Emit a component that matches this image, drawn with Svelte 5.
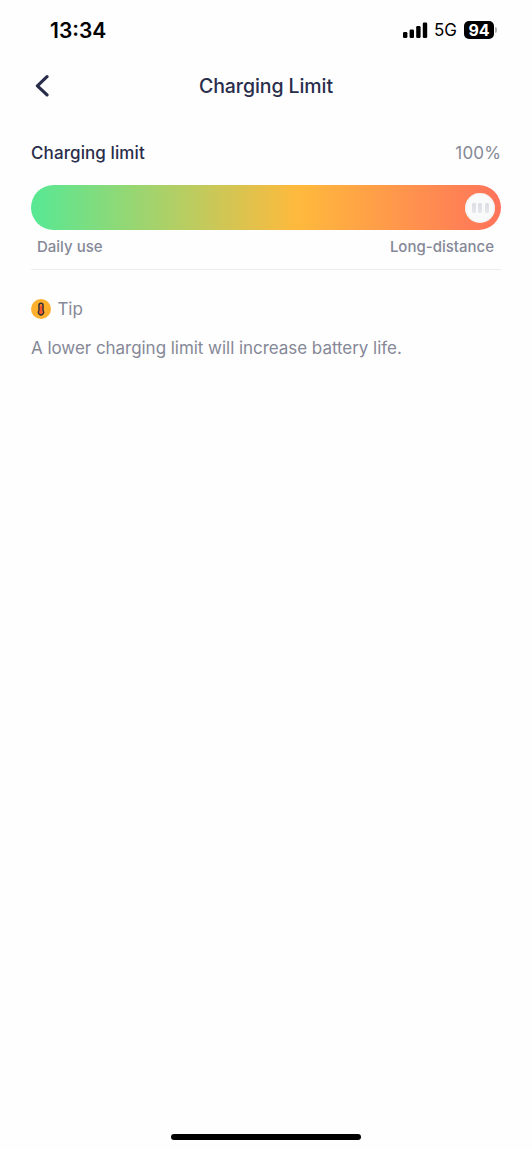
<script lang="ts">
  let limit = $state(100);
  const battery = 94;
  const signalBars = [6, 8.5, 12, 15.5];
</script>

<div class="screen">
  <div class="status-bar">
    <span class="time">13:34</span>
    <div class="status-icons">
      <svg class="signal" width="25" height="16" viewBox="0 0 25 16" aria-hidden="true">
        {#each signalBars as h, i}
          <rect x={i * 6.6} y={16 - h} width="4.4" height={h} rx="1.3" />
        {/each}
      </svg>
      <span class="network">5G</span>
      <div class="battery">
        <span class="battery-level">{battery}</span>
        <span class="battery-cap"></span>
      </div>
    </div>
  </div>

  <header class="nav">
    <button class="back" aria-label="Back">
      <svg width="14" height="22" viewBox="0 0 14 22" fill="none">
        <path d="M12 1.7 2.4 10.8 12 19.9" stroke="currentColor" stroke-width="3.2" stroke-linecap="round" stroke-linejoin="round" />
      </svg>
    </button>
    <h1>Charging Limit</h1>
  </header>

  <main>
    <div class="limit-row">
      <span class="limit-label">Charging limit</span>
      <span class="limit-value">{limit}%</span>
    </div>

    <div class="track">
      <div class="thumb">
        <span></span>
        <span></span>
        <span></span>
      </div>
    </div>

    <div class="range-labels">
      <span class="daily">Daily use</span>
      <span class="distance">Long-distance</span>
    </div>

    <div class="tip-title">
      <svg width="20" height="20" viewBox="0 0 20 20" aria-hidden="true">
        <circle cx="10" cy="10" r="10" fill="#fdb02b" />
        <path
          d="M8 6.2a2 2 0 0 1 4 0v5.6a2.5 2.5 0 1 1-4 0z"
          fill="#f99a2b"
          stroke="#322b35"
          stroke-width="1.5"
        />
        <path d="M10 7.6v5.6" stroke="#f4552e" stroke-width="2.2" stroke-linecap="round" />
        <circle cx="10" cy="13.3" r="1.7" fill="#f4552e" />
      </svg>
      <span>Tip</span>
    </div>
    <p>A lower charging limit will increase battery life.</p>
  </main>

  <div class="home-indicator"></div>
</div>

<style>
  :global(body) {
    background: #fff;
  }

  .screen {
    display: flex;
    flex-direction: column;
    box-sizing: border-box;
    height: 1150px;
    padding-bottom: 10px;
    background: #fefefe;
    color: #282d4b;
    font-family: Inter, "Liberation Sans", sans-serif;
  }

  .status-bar {
    display: flex;
    align-items: center;
    justify-content: space-between;
    height: 60px;
    padding: 0 35px 0 50px;
    color: #000;
  }

  .time {
    font-size: 21px;
    font-weight: 600;
  }

  .status-icons {
    display: flex;
    align-items: center;
  }

  .network {
    margin-left: 6px;
    font-size: 17px;
    line-height: 20px;
  }

  .battery {
    display: flex;
    align-items: center;
    margin-left: 7px;
  }

  .battery-level {
    width: 30px;
    height: 18px;
    border-radius: 5px;
    background: #000;
    color: #fff;
    font-size: 16px;
    font-weight: 700;
    line-height: 18px;
    text-align: center;
  }

  .battery-cap {
    width: 2px;
    height: 6px;
    margin-left: 1px;
    border-radius: 0 2px 2px 0;
    background: #b0b0b0;
  }

  .nav {
    display: grid;
    grid-template-columns: 60px 1fr 60px;
    align-items: center;
    height: 52px;
  }

  .back {
    display: flex;
    padding: 0 0 0 35px;
    border: 0;
    background: none;
    color: #282d4b;
  }

  h1 {
    margin: 0;
    font-size: 19.5px;
    font-weight: 500;
    letter-spacing: -0.08px;
    text-align: center;
  }

  main {
    flex: 1;
    padding: 29px 31px 0;
  }

  .limit-row {
    display: flex;
    justify-content: space-between;
    line-height: 24px;
  }

  .limit-label {
    font-size: 17px;
    font-weight: 500;
    letter-spacing: 0.1px;
  }

  .limit-value {
    color: #858897;
    font-size: 17px;
    letter-spacing: 0.15px;
  }

  .track {
    display: flex;
    align-items: center;
    justify-content: flex-end;
    box-sizing: border-box;
    height: 45px;
    margin-top: 20px;
    padding-right: 6px;
    border-radius: 23px;
    background: linear-gradient(90deg, #57e894 0%, #ffb93c 57%, #ff735b 100%);
  }

  .thumb {
    display: flex;
    align-items: center;
    justify-content: center;
    gap: 2.5px;
    width: 30px;
    height: 30px;
    border-radius: 50%;
    background: #fafafb;
    box-shadow: inset 0 0 2px #ddd;
  }

  .thumb span {
    width: 4px;
    height: 10px;
    border-radius: 1.5px;
    background: linear-gradient(#dadce2, #e6e8ec);
  }

  .range-labels {
    display: flex;
    justify-content: space-between;
    padding: 7px 7px 12px 6px;
    border-bottom: 1px solid #ededf0;
    color: #858897;
    font-size: 15px;
    font-weight: 500;
    line-height: 20px;
  }

  .tip-title {
    display: flex;
    align-items: center;
    gap: 6.5px;
    margin-top: 27px;
    color: #858897;
    font-size: 17px;
    letter-spacing: -0.1px;
    line-height: 24px;
  }

  p {
    margin: 15px 0 0;
    color: #858897;
    font-size: 17px;
    letter-spacing: -0.04px;
    line-height: 24px;
    white-space: nowrap;
  }

  .home-indicator {
    width: 190px;
    height: 6px;
    margin: 0 auto;
    border-radius: 3px;
    background: #000;
  }
</style>
